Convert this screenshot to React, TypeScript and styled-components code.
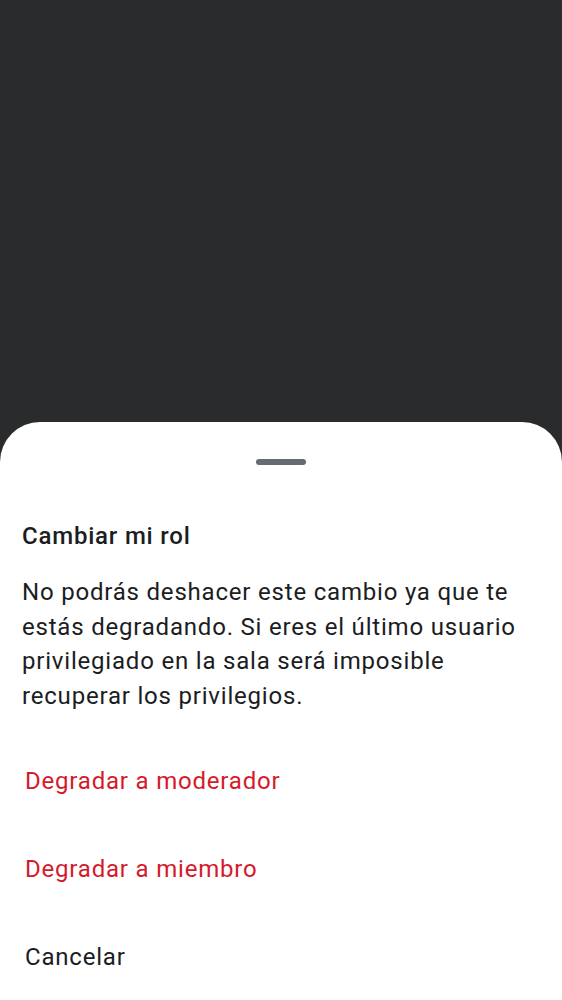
import React from "react";
import styled, { createGlobalStyle } from "styled-components";

const Global = createGlobalStyle`
  html, body { margin: 0; padding: 0; }
  body { background: #2a2b2d; font-family: Roboto, "Noto Sans", sans-serif; }
`;

const Screen = styled.div`
  height: 1000px;
  display: flex;
  flex-direction: column;
  justify-content: flex-end;
  background: #2a2b2d;
  overflow: hidden;
`;

const Sheet = styled.div`
  height: 578px;
  flex-shrink: 0;
  box-sizing: border-box;
  background: #ffffff;
  border-radius: 40px 40px 0 0;
  display: flex;
  flex-direction: column;
  padding: 0 22px;
  overflow: hidden;
  & > * { flex-shrink: 0; }
`;

const Handle = styled.div`
  align-self: center;
  width: 50px;
  height: 6px;
  border-radius: 3px;
  background: #646b73;
  margin-top: 37px;
`;

const Title = styled.h2`
  margin: 57px 0 0;
  font-size: 24px;
  line-height: 28px;
  font-weight: 500;
  letter-spacing: 0.8px;
  color: #1b1d22;
`;

const Body = styled.p`
  margin: 25px 0 0;
  font-size: 24px;
  line-height: 34.5px;
  font-weight: 400;
  letter-spacing: 0.8px;
  color: #1b1d22;
`;

const Actions = styled.div`
  margin-top: 24px;
  display: flex;
  flex-direction: column;
`;

const Action = styled.button<{ $danger?: boolean }>`
  height: 88px;
  flex-shrink: 0;
  border: none;
  background: none;
  padding: 0 0 0 3px;
  text-align: left;
  font-family: Roboto, "Noto Sans", sans-serif;
  font-size: 24px;
  font-weight: 400;
  letter-spacing: 0.8px;
  color: ${(p) => (p.$danger ? "#d51a2b" : "#1b1d22")};
  cursor: pointer;
`;

export default function App() {
  return (
    <>
      <Global />
      <Screen>
        <Sheet>
          <Handle />
          <Title>Cambiar mi rol</Title>
          <Body>
            No podrás deshacer este cambio ya que te estás degradando. Si eres el último usuario
            privilegiado en la sala será imposible recuperar los privilegios.
          </Body>
          <Actions>
            <Action $danger>Degradar a moderador</Action>
            <Action $danger>Degradar a miembro</Action>
            <Action>Cancelar</Action>
          </Actions>
        </Sheet>
      </Screen>
    </>
  );
}
